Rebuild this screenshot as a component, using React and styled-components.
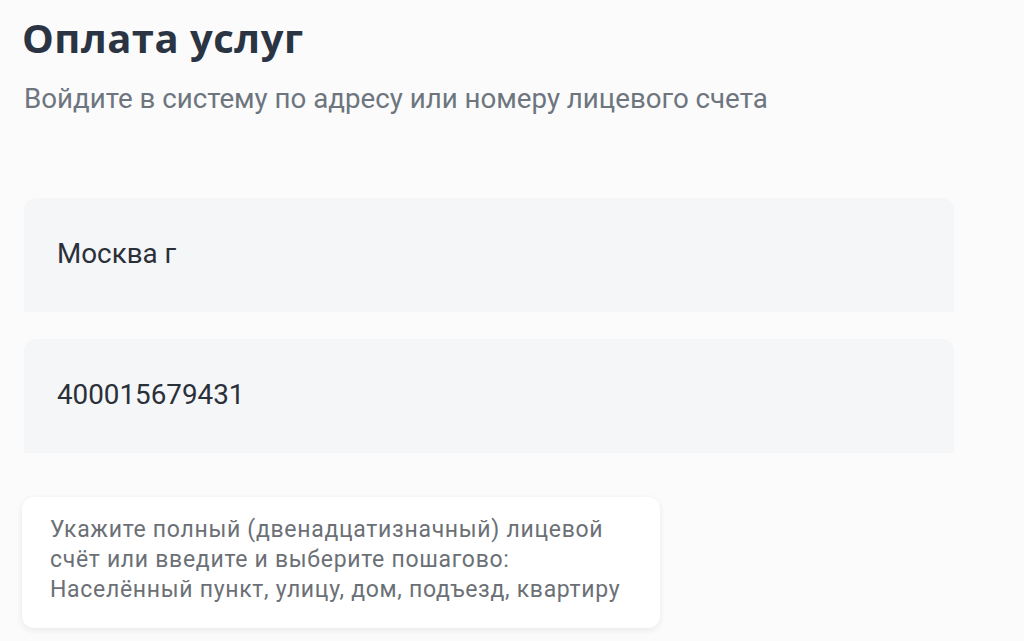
import React from 'react';
import styled, { createGlobalStyle } from 'styled-components';

const GlobalStyle = createGlobalStyle`
  html, body {
    margin: 0;
    padding: 0;
    background: #fbfbfb;
  }
  body {
    font-family: Roboto, "Liberation Sans", sans-serif;
  }
`;

const Page = styled.div`
  width: 1024px;
  height: 641px;
  box-sizing: border-box;
  padding: 14px 0 0 24px;
  overflow: hidden;
`;

const Title = styled.h1`
  margin: 0 0 0 -2px;
  font-family: "Open Sans", "Noto Sans", sans-serif;
  font-weight: 700;
  font-size: 40px;
  line-height: 48px;
  letter-spacing: 0.5px;
  color: #2a3443;
`;

const Subtitle = styled.p`
  margin: 21px 0 0;
  font-size: 27.7px;
  line-height: 32px;
  color: #6d757e;
`;

const Fields = styled.div`
  display: flex;
  flex-direction: column;
  gap: 27px;
  margin-top: 83px;
  width: 930px;
`;

const Field = styled.div`
  height: 114px;
  box-sizing: border-box;
  padding: 0 33px 3px;
  display: flex;
  align-items: center;
  background: #f4f6f8;
  border-radius: 12px 12px 0 0;
  font-size: 27.8px;
  color: #2b3038;
`;

const Hint = styled.div`
  margin: 44px 0 0 -2px;
  width: 638px;
  box-sizing: border-box;
  padding: 18px 20px 23px 28px;
  background: #ffffff;
  border-radius: 12px;
  box-shadow: 0 2px 6px rgba(30, 45, 70, 0.09);
  font-size: 23px;
  line-height: 30px;
  letter-spacing: 0.7px;
  color: #6b7076;
  white-space: nowrap;
`;

const App = () => {
  return (
    <Page>
      <GlobalStyle />
      <Title>Оплата услуг</Title>
      <Subtitle>Войдите в систему по адресу или номеру лицевого счета</Subtitle>
      <Fields>
        <Field>Москва г</Field>
        <Field>400015679431</Field>
      </Fields>
      <Hint>
        Укажите полный (двенадцатизначный) лицевой
        <br />
        счёт или введите и выберите пошагово:
        <br />
        Населённый пункт, улицу, дом, подъезд, квартиру
      </Hint>
    </Page>
  );
};

export default App;
